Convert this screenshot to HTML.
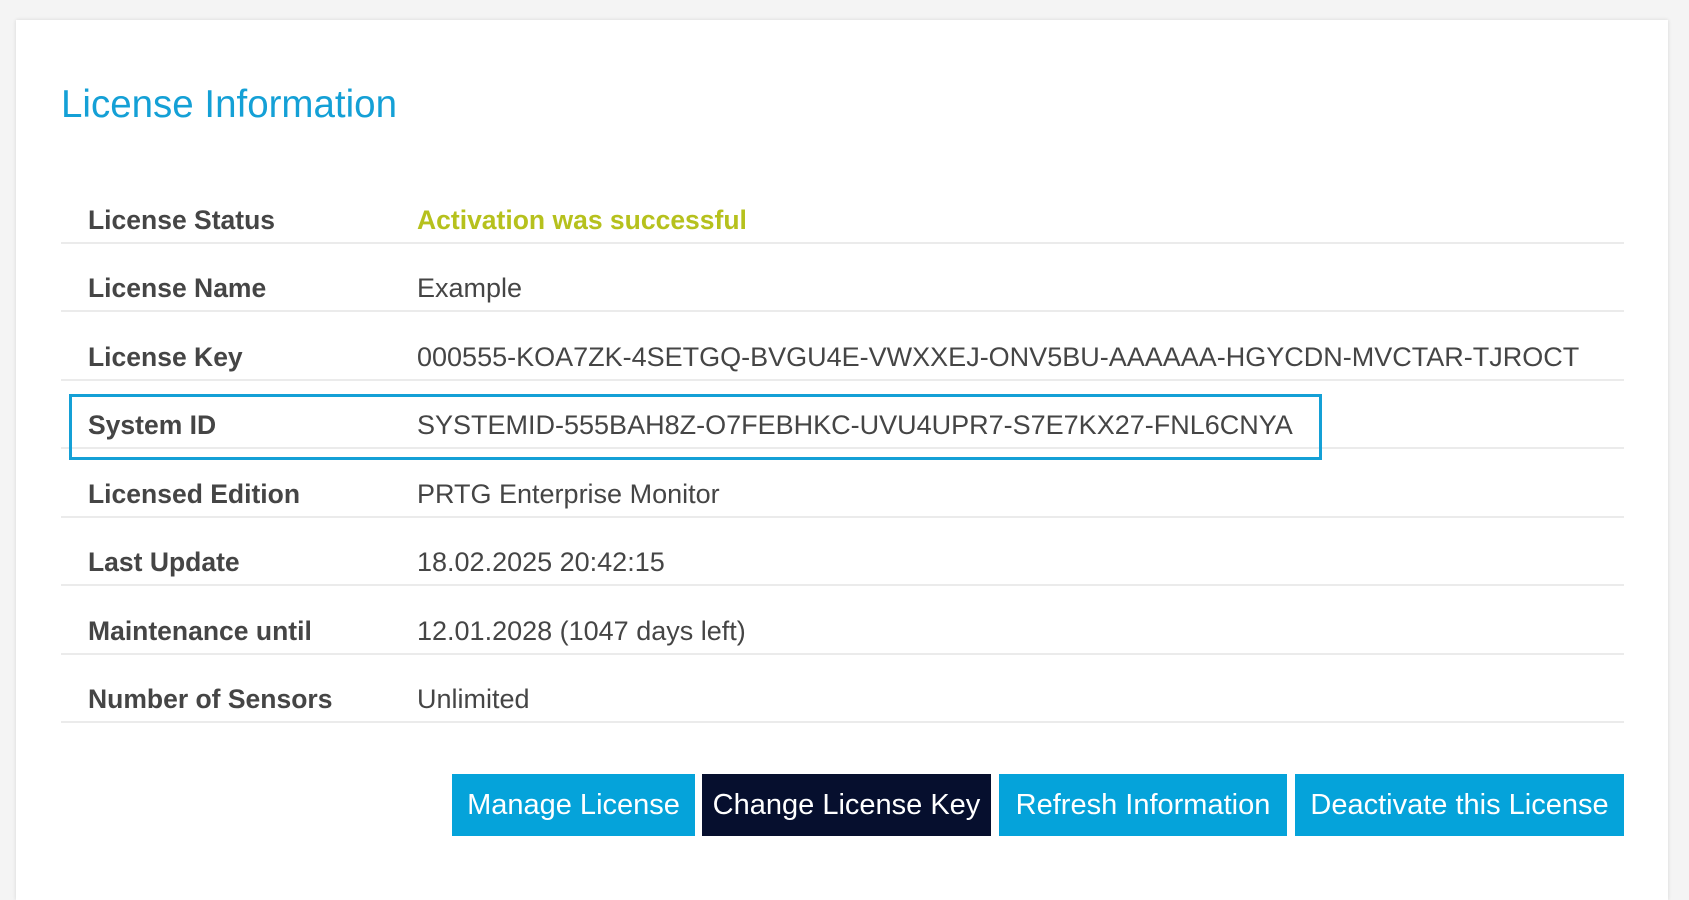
<!DOCTYPE html>
<html><head><meta charset="utf-8"><style>
body{margin:0;width:1689px;height:881px;background:#f4f4f4;font-family:"Liberation Sans",sans-serif;position:relative;overflow:hidden}
.card{position:absolute;left:16px;top:20px;width:1652px;height:880px;background:#fff;box-shadow:0 0 4px rgba(0,0,0,.12)}
h1{position:absolute;left:61px;top:81px;margin:0;font-weight:normal;font-size:38.5px;color:#14a0d6;line-height:48px}
.row{position:absolute;left:61px;width:1563px;height:68px;border-bottom:2px solid #ebebeb;font-size:27px;color:#454545}
.row span{position:absolute;top:27px;line-height:38px}
.l{left:27px;font-weight:bold;font-size:26.5px}
.v{left:356px}
.box{position:absolute;left:69px;top:394px;width:1247px;height:60px;border:3px solid #14a0d6}
.btn{position:absolute;top:774px;height:62px;line-height:62px;color:#fff;font-size:29px;text-align:center;background:#05a3da;white-space:nowrap}
</style></head><body>
<div class="card"></div>
<h1>License Information</h1>
<div class="row" style="top:174px"><span class="l">License Status</span><span class="v" style="color:#b6c11d;font-weight:bold;font-size:26.5px">Activation was successful</span></div>
<div class="row" style="top:242px"><span class="l">License Name</span><span class="v">Example</span></div>
<div class="row" style="top:311px"><span class="l">License Key</span><span class="v">000555-KOA7ZK-4SETGQ-BVGU4E-VWXXEJ-ONV5BU-AAAAAA-HGYCDN-MVCTAR-TJROCT</span></div>
<div class="row" style="top:379px"><span class="l">System ID</span><span class="v">SYSTEMID-555BAH8Z-O7FEBHKC-UVU4UPR7-S7E7KX27-FNL6CNYA</span></div>
<div class="row" style="top:448px"><span class="l">Licensed Edition</span><span class="v">PRTG Enterprise Monitor</span></div>
<div class="row" style="top:516px"><span class="l">Last Update</span><span class="v">18.02.2025 20:42:15</span></div>
<div class="row" style="top:585px"><span class="l">Maintenance until</span><span class="v">12.01.2028 (1047 days left)</span></div>
<div class="row" style="top:653px"><span class="l">Number of Sensors</span><span class="v">Unlimited</span></div>
<div class="box"></div>
<div class="btn" style="left:452px;width:243px">Manage License</div>
<div class="btn" style="left:702px;width:289px;background:#060f2e">Change License Key</div>
<div class="btn" style="left:999px;width:288px">Refresh Information</div>
<div class="btn" style="left:1295px;width:329px">Deactivate this License</div>
</body></html>
